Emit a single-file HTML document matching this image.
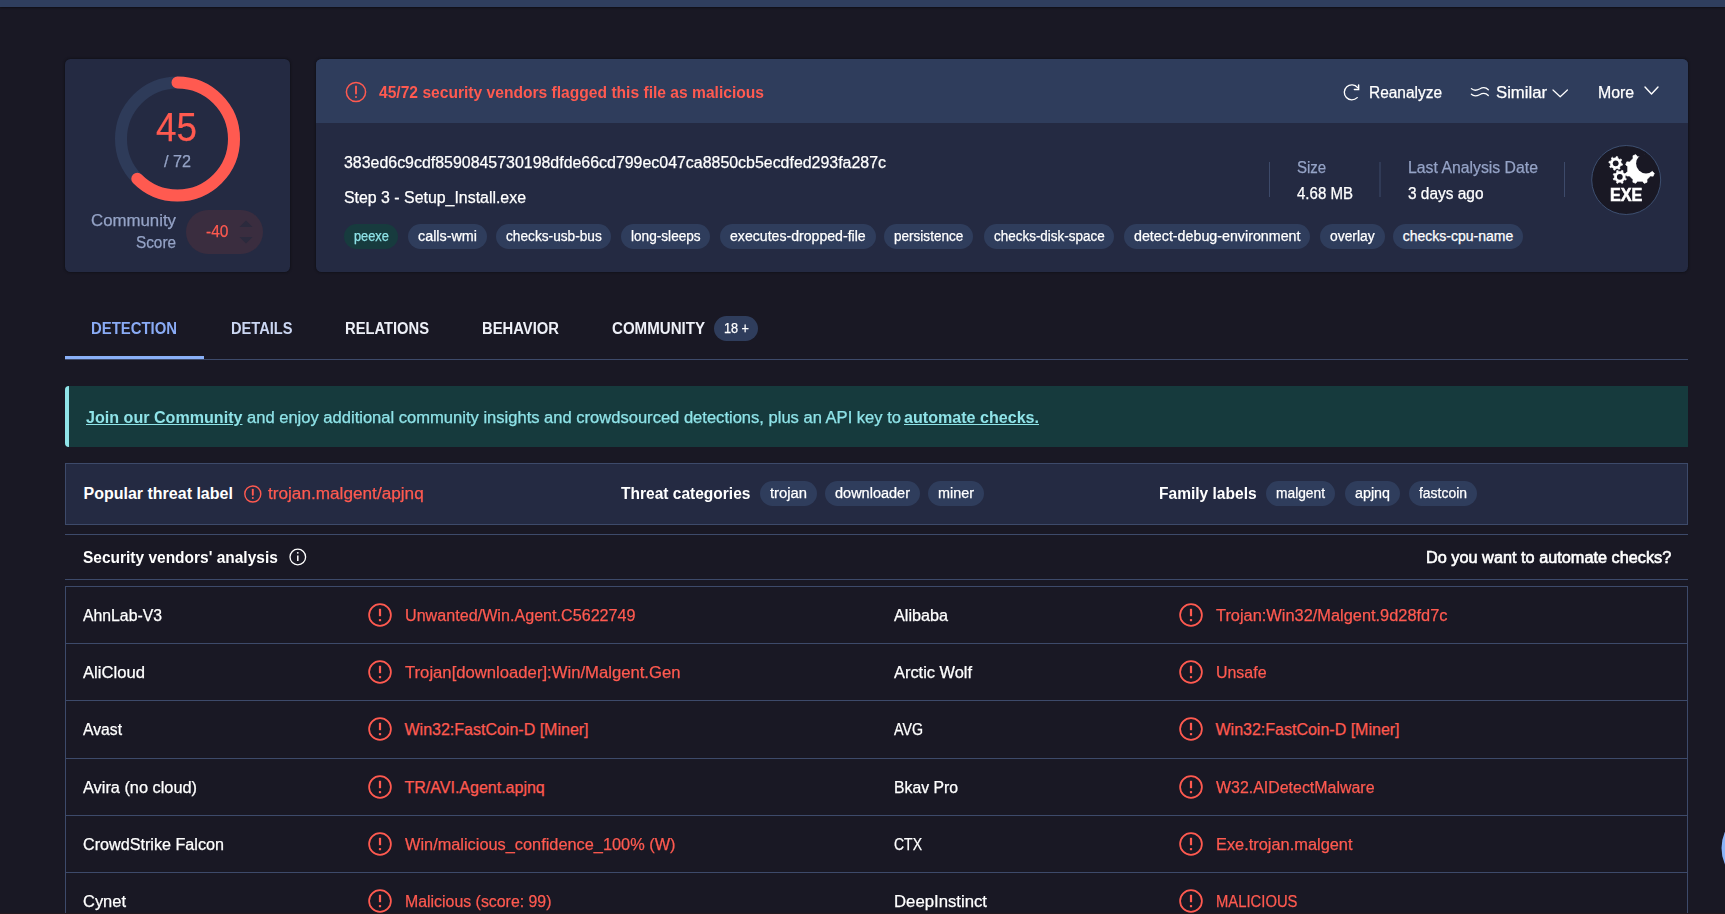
<!DOCTYPE html>
<html><head><meta charset="utf-8">
<style>
html,body{margin:0;padding:0;}
body{width:1725px;height:914px;overflow:hidden;background:#191824;position:relative;font-family:"Liberation Sans", sans-serif;}
.t{position:absolute;white-space:pre;transform-origin:0 0;font-family:"Liberation Sans", sans-serif;}
.n{-webkit-text-stroke:0.25px currentColor;}
.pill{position:absolute;border-radius:13px;}
.box{position:absolute;}
svg{position:absolute;overflow:visible;}
</style></head><body>
<!-- top bar -->
<div class="box" style="left:0;top:0;width:1725px;height:7px;background:#2f3e5e;box-shadow:0 1px 2px rgba(0,0,0,0.4)"></div>

<!-- score card -->
<div class="box" style="left:65px;top:59px;width:225px;height:213px;background:#242a42;border-radius:5.5px;box-shadow:0 0 2px 1px rgba(10,10,16,0.45);"></div>
<svg style="left:0;top:0" width="1725" height="914" viewBox="0 0 1725 914">
  <circle cx="177.5" cy="139" r="56.5" fill="none" stroke="#2e3b59" stroke-width="12"/>
  <circle cx="177.5" cy="139" r="56.5" fill="none" stroke="#ff5a50" stroke-width="12" stroke-linecap="round"
    stroke-dasharray="221.9 1000" transform="rotate(-90 177.5 139)"/>
</svg>
<div class="box" style="left:186px;top:210px;width:77px;height:44px;border-radius:22px;background:#3a2d3f"></div>
<svg style="left:0;top:0" width="1725" height="914">
  <path d="M239.5 227 L246 220.5 L252.5 227 Z" fill="#2b2a3d"/>
  <path d="M239.5 237 L246 243.5 L252.5 237 Z" fill="#2b2a3d"/>
</svg>

<!-- main card -->
<div class="box" style="left:316px;top:59px;width:1372px;height:213px;background:#242a42;border-radius:5.5px;overflow:hidden;box-shadow:0 0 2px 1px rgba(10,10,16,0.45)">
  <div style="position:absolute;left:0;top:0;width:100%;height:64px;background:#2f3d5c"></div>
</div>
<svg style="left:0;top:0" width="1725" height="914">
  <!-- header alert icon -->
  <circle cx="356" cy="92" r="9.6" fill="none" stroke="#ff5a50" stroke-width="1.5"/>
  <path d="M356 86.5 V93.5" stroke="#ff5a50" stroke-width="1.8" stroke-linecap="round"/>
  <circle cx="356" cy="97" r="1" fill="#ff5a50"/>
  <!-- reanalyze icon -->
  <path d="M1357.2 97.6 A7.5 7.5 0 1 1 1357.6 87.6" fill="none" stroke="#fff" stroke-width="1.35" stroke-linecap="round"/>
  <path d="M1358.6 85 V89.4 H1354.4" fill="none" stroke="#fff" stroke-width="1.5" stroke-linecap="round" stroke-linejoin="miter"/>
  <!-- similar icon -->
  <path d="M1471.4 88.6 C1473.5 90.6 1476.5 90.6 1479.5 89 C1482.5 87.3 1486 87.3 1488.3 89.8" fill="none" stroke="#fff" stroke-width="1.3" stroke-linecap="round"/>
  <path d="M1471.4 94.3 C1473.5 96.3 1476.5 96.3 1479.5 94.7 C1482.5 93 1486 93 1488.3 95.5" fill="none" stroke="#fff" stroke-width="1.3" stroke-linecap="round"/>
  <!-- chevrons -->
  <path d="M1553 90 L1560.2 96.8 L1567.4 90" fill="none" stroke="#fff" stroke-width="1.2" stroke-linecap="round" stroke-linejoin="round"/>
  <path d="M1645 87 L1651.5 94 L1658 87" fill="none" stroke="#fff" stroke-width="1.4" stroke-linecap="round" stroke-linejoin="round"/>
  <!-- separators -->
  <rect x="1269" y="162" width="1" height="35" fill="#3d4a6a"/>
  <rect x="1379.5" y="162" width="1" height="35" fill="#3d4a6a"/>
  <rect x="1564" y="162" width="1" height="35" fill="#3d4a6a"/>
  <!-- exe icon -->
  <circle cx="1626.2" cy="180" r="34.5" fill="#191824" stroke="#3d4f70" stroke-width="1"/>
  <mask id="hm" maskUnits="userSpaceOnUse" x="1590" y="140" width="80" height="80"><rect x="1590" y="140" width="80" height="80" fill="#fff"/><circle cx="1646" cy="163.6" r="9.9" fill="#000"/></mask>
  <g fill="#fff" stroke="#fff" stroke-width="0.6" stroke-linejoin="round">
    <path d="M1621.20 163.30 L1622.57 163.95 L1622.29 165.33 L1620.78 165.40 L1619.59 167.19 L1620.10 168.62 L1618.93 169.40 L1617.80 168.38 L1615.70 168.80 L1615.05 170.17 L1613.67 169.89 L1613.60 168.38 L1611.81 167.19 L1610.38 167.70 L1609.60 166.53 L1610.62 165.40 L1610.20 163.30 L1608.83 162.65 L1609.11 161.27 L1610.62 161.20 L1611.81 159.41 L1611.30 157.98 L1612.47 157.20 L1613.60 158.22 L1615.70 157.80 L1616.35 156.43 L1617.73 156.71 L1617.80 158.22 L1619.59 159.41 L1621.02 158.90 L1621.80 160.07 L1620.78 161.20 Z"/>
    <path d="M1625.19 177.89 L1626.40 178.80 L1625.86 180.10 L1624.36 179.87 L1622.84 181.38 L1623.05 182.88 L1621.75 183.42 L1620.85 182.20 L1618.71 182.19 L1617.80 183.40 L1616.50 182.86 L1616.73 181.36 L1615.22 179.84 L1613.72 180.05 L1613.18 178.75 L1614.40 177.85 L1614.41 175.71 L1613.20 174.80 L1613.74 173.50 L1615.24 173.73 L1616.76 172.22 L1616.55 170.72 L1617.85 170.18 L1618.75 171.40 L1620.89 171.41 L1621.80 170.20 L1623.10 170.74 L1622.87 172.24 L1624.38 173.76 L1625.88 173.55 L1626.42 174.85 L1625.20 175.75 Z"/>
    <path mask="url(#hm)" d="M1652.35 171.50 L1654.36 173.35 L1653.17 176.17 L1650.45 176.04 L1646.96 179.50 L1647.07 182.23 L1644.25 183.39 L1642.41 181.37 L1637.50 181.35 L1635.65 183.36 L1632.83 182.17 L1632.96 179.45 L1629.50 175.96 L1626.77 176.07 L1625.61 173.25 L1627.63 171.41 L1627.65 166.50 L1625.64 164.65 L1626.83 161.83 L1629.55 161.96 L1633.04 158.50 L1632.93 155.77 L1635.75 154.61 L1637.59 156.63 L1642.50 156.65 L1644.35 154.64 L1647.17 155.83 L1647.04 158.55 L1650.50 162.04 L1653.23 161.93 L1654.39 164.75 L1652.37 166.59 Z"/>
  </g>
  <circle cx="1615.7" cy="163.3" r="2.9" fill="#191824"/>
  <circle cx="1619.8" cy="176.8" r="2.9" fill="#191824"/>
  
</svg>

<!-- tabs -->
<div class="box" style="left:65px;top:359px;width:1623px;height:1px;background:#3d4a6a"></div>
<div class="box" style="left:65px;top:356px;width:139px;height:3px;background:#8ab0f8"></div>
<div class="box" style="left:714px;top:316px;width:44px;height:25px;border-radius:12.5px;background:#2f3d5c"></div>

<!-- banner -->
<div class="box" style="left:65px;top:386px;width:1623px;height:61px;background:#163a3d;border-radius:4px 0 0 4px;overflow:hidden">
  <div style="position:absolute;left:0;top:0;width:4px;height:100%;background:#8fe3e8"></div>
</div>

<!-- popular -->
<div class="box" style="left:65px;top:463px;width:1621px;height:60px;background:#242a42;border:1px solid #3d4a6a"></div>
<svg style="left:0;top:0" width="1725" height="914">
  <circle cx="252.8" cy="494" r="8" fill="none" stroke="#ff5a50" stroke-width="1.4"/>
  <path d="M252.8 489.6 V494.8" stroke="#ff5a50" stroke-width="1.9" stroke-linecap="round"/>
  <circle cx="252.8" cy="497.9" r="1" fill="#ff5a50"/>
  <!-- info icon -->
  <circle cx="297.8" cy="557" r="7.8" fill="none" stroke="#fff" stroke-width="1.3"/>
  <path d="M297.8 555.5 V561" stroke="#fff" stroke-width="1.5"/>
  <circle cx="297.8" cy="552.8" r="0.9" fill="#fff"/>
</svg>

<div class="t" style="left:1610px;top:186px;font-size:18px;line-height:18px;font-weight:bold;color:#fff;transform:scaleX(0.90);-webkit-text-stroke:0.6px #fff">EXE</div>
<div class="pill" style="left:344px;top:224px;width:54px;height:25px;background:#173b3e"></div>
<div class="pill" style="left:408px;top:224px;width:79px;height:25px;background:#2f3d5c"></div>
<div class="pill" style="left:496px;top:224px;width:115px;height:25px;background:#2f3d5c"></div>
<div class="pill" style="left:621px;top:224px;width:89px;height:25px;background:#2f3d5c"></div>
<div class="pill" style="left:720px;top:224px;width:156px;height:25px;background:#2f3d5c"></div>
<div class="pill" style="left:884px;top:224px;width:89px;height:25px;background:#2f3d5c"></div>
<div class="pill" style="left:984px;top:224px;width:130px;height:25px;background:#2f3d5c"></div>
<div class="pill" style="left:1124px;top:224px;width:186px;height:25px;background:#2f3d5c"></div>
<div class="pill" style="left:1320px;top:224px;width:65px;height:25px;background:#2f3d5c"></div>
<div class="pill" style="left:1393px;top:224px;width:130px;height:25px;background:#2f3d5c"></div>
<div class="pill" style="left:760px;top:481px;width:57px;height:25px;background:#2f3d5c"></div>
<div class="pill" style="left:825px;top:481px;width:95px;height:25px;background:#2f3d5c"></div>
<div class="pill" style="left:928px;top:481px;width:56px;height:25px;background:#2f3d5c"></div>
<div class="pill" style="left:1266px;top:481px;width:69px;height:25px;background:#2f3d5c"></div>
<div class="pill" style="left:1345px;top:481px;width:55px;height:25px;background:#2f3d5c"></div>
<div class="pill" style="left:1409px;top:481px;width:68px;height:25px;background:#2f3d5c"></div>
<!-- vendors header lines -->
<div class="box" style="left:65px;top:534px;width:1623px;height:1px;background:#3d4a6a"></div>
<div class="box" style="left:65px;top:579px;width:1623px;height:1px;background:#3d4a6a"></div>

<!-- table -->
<div class="box" style="left:65px;top:586px;width:1621px;height:400px;border:1px solid #3d4a6a;border-bottom:none"></div>
<div class="box" style="left:65px;top:643px;width:1623px;height:1px;background:#3d4a6a"></div>
<div class="box" style="left:65px;top:700px;width:1623px;height:1px;background:#3d4a6a"></div>
<div class="box" style="left:65px;top:758px;width:1623px;height:1px;background:#3d4a6a"></div>
<div class="box" style="left:65px;top:815px;width:1623px;height:1px;background:#3d4a6a"></div>
<div class="box" style="left:65px;top:872px;width:1623px;height:1px;background:#3d4a6a"></div>
<svg style="left:0;top:0" width="1725" height="914">
  <defs>
    <g id="al">
      <circle cx="0" cy="0" r="10.9" fill="none" stroke="#ff5a50" stroke-width="1.75"/>
      <rect x="-1.1" y="-6.2" width="2.2" height="7.4" fill="#ff5a50"/>
      <rect x="-1.1" y="4.1" width="2.2" height="2.1" fill="#ff5a50"/>
    </g>
  </defs>
  <use href="#al" x="380" y="615"/>
  <use href="#al" x="380" y="672"/>
  <use href="#al" x="380" y="729"/>
  <use href="#al" x="380" y="787"/>
  <use href="#al" x="380" y="844"/>
  <use href="#al" x="380" y="901"/>
  <use href="#al" x="1191" y="615"/>
  <use href="#al" x="1191" y="672"/>
  <use href="#al" x="1191" y="729"/>
  <use href="#al" x="1191" y="787"/>
  <use href="#al" x="1191" y="844"/>
  <use href="#al" x="1191" y="901"/>
  <!-- right edge blue bubble -->
  <circle cx="1761.5" cy="848" r="40" fill="#8ab4f8"/>
</svg>
<div class="box" style="left:0;top:913px;width:1725px;height:1px;background:#24191e"></div>
<div class="t" style="left:378.8px;top:85.0px;font-size:16px;line-height:16px;font-weight:bold;color:#ff5a50;transform:scaleX(0.9751);">45/72 security vendors flagged this file as malicious</div>
<div class="t n" style="left:1368.6px;top:85.2px;font-size:16px;line-height:16px;font-weight:normal;color:#ffffff;transform:scaleX(0.9655);">Reanalyze</div>
<div class="t n" style="left:1496.0px;top:85.2px;font-size:16px;line-height:16px;font-weight:normal;color:#ffffff;transform:scaleX(1.0431);">Similar</div>
<div class="t n" style="left:1597.6px;top:85.2px;font-size:16px;line-height:16px;font-weight:normal;color:#ffffff;transform:scaleX(0.9931);">More</div>
<div class="t n" style="left:343.9px;top:155.0px;font-size:16px;line-height:16px;font-weight:normal;color:#ffffff;transform:scaleX(0.9954);">383ed6c9cdf8590845730198dfde66cd799ec047ca8850cb5ecdfed293fa287c</div>
<div class="t n" style="left:343.9px;top:190.0px;font-size:16px;line-height:16px;font-weight:normal;color:#ffffff;transform:scaleX(0.9933);">Step 3 - Setup_Install.exe</div>
<div class="t n" style="left:1296.7px;top:160.0px;font-size:16px;line-height:16px;font-weight:normal;color:#95a3c6;transform:scaleX(0.9382);">Size</div>
<div class="t n" style="left:1296.7px;top:186.0px;font-size:16px;line-height:16px;font-weight:normal;color:#ffffff;transform:scaleX(0.9397);">4.68 MB</div>
<div class="t n" style="left:1407.5px;top:160.0px;font-size:16px;line-height:16px;font-weight:normal;color:#95a3c6;transform:scaleX(0.9877);">Last Analysis Date</div>
<div class="t n" style="left:1407.5px;top:186.0px;font-size:16px;line-height:16px;font-weight:normal;color:#ffffff;transform:scaleX(0.9645);">3 days ago</div>
<div class="t n" style="left:156.0px;top:107.0px;font-size:41px;line-height:41px;font-weight:normal;color:#ff5a50;transform:scaleX(0.8989);">45</div>
<div class="t n" style="left:163.5px;top:154.0px;font-size:16px;line-height:16px;font-weight:normal;color:#95a3c6;transform:scaleX(1.0117);">/ 72</div>
<div class="t n" style="left:91.0px;top:212.7px;font-size:16px;line-height:16px;font-weight:normal;color:#95a3c6;transform:scaleX(1.0506);">Community</div>
<div class="t n" style="left:136.0px;top:234.8px;font-size:16px;line-height:16px;font-weight:normal;color:#95a3c6;transform:scaleX(0.9570);">Score</div>
<div class="t n" style="left:206.0px;top:224.3px;font-size:16px;line-height:16px;font-weight:normal;color:#ff5a50;transform:scaleX(0.9686);">-40</div>
<div class="t n" style="left:353.5px;top:229.0px;font-size:14px;line-height:14px;font-weight:normal;color:#8fe3e8;transform:scaleX(0.9147);">peexe</div>
<div class="t n" style="left:417.8px;top:229.0px;font-size:14px;line-height:14px;font-weight:normal;color:#ffffff;transform:scaleX(1.0250);">calls-wmi</div>
<div class="t n" style="left:505.5px;top:229.0px;font-size:14px;line-height:14px;font-weight:normal;color:#ffffff;transform:scaleX(0.9771);">checks-usb-bus</div>
<div class="t n" style="left:630.7px;top:229.0px;font-size:14px;line-height:14px;font-weight:normal;color:#ffffff;transform:scaleX(0.9733);">long-sleeps</div>
<div class="t n" style="left:730.0px;top:229.0px;font-size:14px;line-height:14px;font-weight:normal;color:#ffffff;transform:scaleX(1.0079);">executes-dropped-file</div>
<div class="t n" style="left:893.7px;top:229.0px;font-size:14px;line-height:14px;font-weight:normal;color:#ffffff;transform:scaleX(0.9680);">persistence</div>
<div class="t n" style="left:993.7px;top:229.0px;font-size:14px;line-height:14px;font-weight:normal;color:#ffffff;transform:scaleX(0.9613);">checks-disk-space</div>
<div class="t n" style="left:1134.0px;top:229.0px;font-size:14px;line-height:14px;font-weight:normal;color:#ffffff;transform:scaleX(1.0187);">detect-debug-environment</div>
<div class="t n" style="left:1330.0px;top:229.0px;font-size:14px;line-height:14px;font-weight:normal;color:#ffffff;transform:scaleX(0.9902);">overlay</div>
<div class="t n" style="left:1402.8px;top:229.0px;font-size:14px;line-height:14px;font-weight:normal;color:#ffffff;">checks-cpu-name</div>
<div class="t" style="left:91.3px;top:321.4px;font-size:16px;line-height:16px;font-weight:bold;color:#8aabf5;transform:scaleX(0.9302);">DETECTION</div>
<div class="t" style="left:230.5px;top:321.4px;font-size:16px;line-height:16px;font-weight:bold;color:#cbd6f2;transform:scaleX(0.9143);">DETAILS</div>
<div class="t" style="left:345.0px;top:321.4px;font-size:16px;line-height:16px;font-weight:bold;color:#eef0f8;transform:scaleX(0.9204);">RELATIONS</div>
<div class="t" style="left:482.0px;top:321.4px;font-size:16px;line-height:16px;font-weight:bold;color:#eef0f8;transform:scaleX(0.9248);">BEHAVIOR</div>
<div class="t" style="left:612.0px;top:321.4px;font-size:16px;line-height:16px;font-weight:bold;color:#eef0f8;transform:scaleX(0.9427);">COMMUNITY</div>
<div class="t n" style="left:724.0px;top:321.2px;font-size:14px;line-height:14px;font-weight:normal;color:#ffffff;transform:scaleX(0.9045);">18 +</div>
<div class="t" style="left:86.3px;top:410.0px;font-size:16px;line-height:16px;font-weight:bold;color:#8fe3e8;transform:scaleX(1.0060);text-decoration:underline;">Join our Community</div>
<div class="t n" style="left:247.0px;top:410.0px;font-size:16px;line-height:16px;font-weight:normal;color:#8fe3e8;transform:scaleX(1.0342);">and enjoy additional community insights and crowdsourced detections, plus an API key to</div>
<div class="t" style="left:904.0px;top:410.0px;font-size:16px;line-height:16px;font-weight:bold;color:#8fe3e8;transform:scaleX(1.0054);text-decoration:underline;">automate checks.</div>
<div class="t" style="left:83.5px;top:486.0px;font-size:16px;line-height:16px;font-weight:bold;color:#ffffff;">Popular threat label</div>
<div class="t n" style="left:268.3px;top:486.0px;font-size:16px;line-height:16px;font-weight:normal;color:#ff5a50;transform:scaleX(1.0739);">trojan.malgent/apjnq</div>
<div class="t" style="left:621.3px;top:486.0px;font-size:16px;line-height:16px;font-weight:bold;color:#ffffff;transform:scaleX(0.9701);">Threat categories</div>
<div class="t" style="left:1159.4px;top:486.0px;font-size:16px;line-height:16px;font-weight:bold;color:#ffffff;transform:scaleX(0.9711);">Family labels</div>
<div class="t n" style="left:770.0px;top:485.6px;font-size:14px;line-height:14px;font-weight:normal;color:#ffffff;transform:scaleX(1.0562);">trojan</div>
<div class="t n" style="left:835.0px;top:485.6px;font-size:14px;line-height:14px;font-weight:normal;color:#ffffff;transform:scaleX(1.0360);">downloader</div>
<div class="t n" style="left:938.0px;top:485.6px;font-size:14px;line-height:14px;font-weight:normal;color:#ffffff;transform:scaleX(1.0281);">miner</div>
<div class="t n" style="left:1276.0px;top:485.6px;font-size:14px;line-height:14px;font-weight:normal;color:#ffffff;transform:scaleX(0.9837);">malgent</div>
<div class="t n" style="left:1355.0px;top:485.6px;font-size:14px;line-height:14px;font-weight:normal;color:#ffffff;transform:scaleX(1.0214);">apjnq</div>
<div class="t n" style="left:1419.0px;top:485.6px;font-size:14px;line-height:14px;font-weight:normal;color:#ffffff;transform:scaleX(0.9948);">fastcoin</div>
<div class="t" style="left:82.8px;top:550.3px;font-size:16px;line-height:16px;font-weight:bold;color:#ffffff;transform:scaleX(0.9680);">Security vendors&#x27; analysis</div>
<div class="t n" style="left:1425.7px;top:550.0px;font-size:16px;line-height:16px;font-weight:normal;color:#ffffff;transform:scaleX(1.0177);-webkit-text-stroke:0.6px #fff;">Do you want to automate checks?</div>
<div class="t n" style="left:83.0px;top:608.0px;font-size:16px;line-height:16px;font-weight:normal;color:#ffffff;transform:scaleX(0.9867);">AhnLab-V3</div>
<div class="t n" style="left:404.5px;top:608.0px;font-size:16px;line-height:16px;font-weight:normal;color:#ff5a50;transform:scaleX(1.0083);">Unwanted/Win.Agent.C5622749</div>
<div class="t n" style="left:894.0px;top:608.0px;font-size:16px;line-height:16px;font-weight:normal;color:#ffffff;transform:scaleX(1.0117);">Alibaba</div>
<div class="t n" style="left:1215.5px;top:608.0px;font-size:16px;line-height:16px;font-weight:normal;color:#ff5a50;transform:scaleX(1.0234);">Trojan:Win32/Malgent.9d28fd7c</div>
<div class="t n" style="left:83.0px;top:665.0px;font-size:16px;line-height:16px;font-weight:normal;color:#ffffff;transform:scaleX(1.0404);">AliCloud</div>
<div class="t n" style="left:404.5px;top:665.0px;font-size:16px;line-height:16px;font-weight:normal;color:#ff5a50;transform:scaleX(1.0418);">Trojan[downloader]:Win/Malgent.Gen</div>
<div class="t n" style="left:894.0px;top:665.0px;font-size:16px;line-height:16px;font-weight:normal;color:#ffffff;transform:scaleX(1.0242);">Arctic Wolf</div>
<div class="t n" style="left:1215.5px;top:665.0px;font-size:16px;line-height:16px;font-weight:normal;color:#ff5a50;transform:scaleX(0.9960);">Unsafe</div>
<div class="t n" style="left:83.0px;top:722.0px;font-size:16px;line-height:16px;font-weight:normal;color:#ffffff;transform:scaleX(0.9815);">Avast</div>
<div class="t n" style="left:404.5px;top:722.0px;font-size:16px;line-height:16px;font-weight:normal;color:#ff5a50;">Win32:FastCoin-D [Miner]</div>
<div class="t n" style="left:894.0px;top:722.0px;font-size:16px;line-height:16px;font-weight:normal;color:#ffffff;transform:scaleX(0.8893);">AVG</div>
<div class="t n" style="left:1215.5px;top:722.0px;font-size:16px;line-height:16px;font-weight:normal;color:#ff5a50;">Win32:FastCoin-D [Miner]</div>
<div class="t n" style="left:83.0px;top:780.0px;font-size:16px;line-height:16px;font-weight:normal;color:#ffffff;transform:scaleX(1.0200);">Avira (no cloud)</div>
<div class="t n" style="left:404.5px;top:780.0px;font-size:16px;line-height:16px;font-weight:normal;color:#ff5a50;">TR/AVI.Agent.apjnq</div>
<div class="t n" style="left:894.0px;top:780.0px;font-size:16px;line-height:16px;font-weight:normal;color:#ffffff;transform:scaleX(0.9858);">Bkav Pro</div>
<div class="t n" style="left:1215.5px;top:780.0px;font-size:16px;line-height:16px;font-weight:normal;color:#ff5a50;transform:scaleX(0.9958);">W32.AIDetectMalware</div>
<div class="t n" style="left:83.0px;top:837.0px;font-size:16px;line-height:16px;font-weight:normal;color:#ffffff;transform:scaleX(1.0100);">CrowdStrike Falcon</div>
<div class="t n" style="left:404.5px;top:837.0px;font-size:16px;line-height:16px;font-weight:normal;color:#ff5a50;transform:scaleX(1.0208);">Win/malicious_confidence_100% (W)</div>
<div class="t n" style="left:894.0px;top:837.0px;font-size:16px;line-height:16px;font-weight:normal;color:#ffffff;transform:scaleX(0.8750);">CTX</div>
<div class="t n" style="left:1215.5px;top:837.0px;font-size:16px;line-height:16px;font-weight:normal;color:#ff5a50;transform:scaleX(1.0232);">Exe.trojan.malgent</div>
<div class="t n" style="left:83.0px;top:894.0px;font-size:16px;line-height:16px;font-weight:normal;color:#ffffff;transform:scaleX(1.0288);">Cynet</div>
<div class="t n" style="left:404.5px;top:894.0px;font-size:16px;line-height:16px;font-weight:normal;color:#ff5a50;transform:scaleX(0.9925);">Malicious (score: 99)</div>
<div class="t n" style="left:894.0px;top:894.0px;font-size:16px;line-height:16px;font-weight:normal;color:#ffffff;transform:scaleX(1.0457);">DeepInstinct</div>
<div class="t n" style="left:1215.5px;top:894.0px;font-size:16px;line-height:16px;font-weight:normal;color:#ff5a50;transform:scaleX(0.9260);">MALICIOUS</div>
</body></html>
